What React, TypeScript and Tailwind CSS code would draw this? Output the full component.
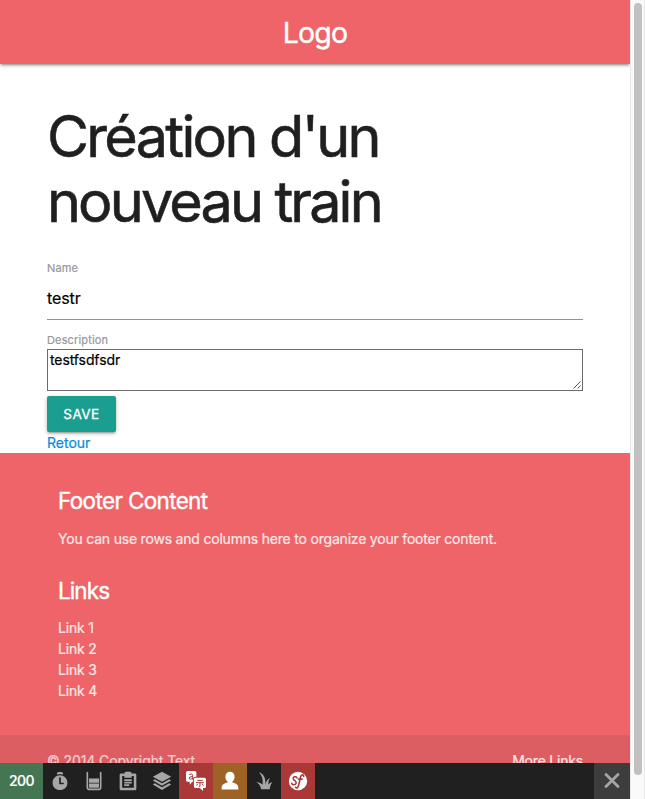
import React from "react";

const GREY = "#a6a6a6";

function ToolbarIcon({ className, children }: { className?: string; children: React.ReactNode }) {
  return (
    <div className={"flex h-9 w-[34px] shrink-0 items-center justify-center " + (className ?? "")}>
      <svg width="20" height="20" viewBox="0 0 24 24" fill={GREY}>
        {children}
      </svg>
    </div>
  );
}

function Toolbar() {
  return (
    <div className="absolute bottom-0 left-0 flex h-9 w-[630px] bg-[#202020]">
      <div className="flex h-9 w-[43px] items-center justify-center bg-[#457653] text-sm font-medium tracking-[-0.600px] text-white">200</div>
      <ToolbarIcon>
        <path d="M15.1,4.3c-2.1-0.5-4.2-0.5-6.2,0C8.6,4.3,8.2,4.1,8.2,3.8V3.4c0-1.2,1-2.3,2.3-2.3h3c1.2,0,2.3,1,2.3,2.3v0.3C15.8,4.1,15.4,4.3,15.1,4.3z M20.9,14c0,4.9-4,8.9-8.9,8.9s-8.9-4-8.9-8.9s4-8.9,8.9-8.9S20.9,9.1,20.9,14z M16.7,15c0-0.6-0.4-1-1-1H13V8.4c0-0.6-0.4-1-1-1s-1,0.4-1,1v6.2c0,0.6,0.4,1.3,1,1.3h3.7C16.2,16,16.7,15.6,16.7,15z" />
      </ToolbarIcon>
      <ToolbarIcon>
        <path d="M6,18.9V15h12v3.9c0,0.7-0.2,1.1-1,1.1H7C6.2,20,6,19.6,6,18.9z M20,1c-0.6,0-1,0.5-1,1.1l0,18c0,0.5-0.4,0.9-0.9,0.9H5.9C5.4,21,5,20.6,5,20.1l0-18C5,1.5,4.6,1,4,1C3.5,1,3,1.5,3,2.1l0,18C3,21.7,4.3,23,5.9,23h12.2c1.6,0,2.9-1.3,2.9-2.9l0-18C21,1.5,20.6,1,20,1z M18,9H6v5h12V9z" />
      </ToolbarIcon>
      <ToolbarIcon>
        <path
          fillRule="evenodd"
          d="M3.5 3H8V2.2Q8 1 9.2 1h5.6Q16 1 16 2.2V3h4.5Q22 3 22 4.5v17q0 1.500-1.500 1.500h-17Q2 23 2 21.500v-17Q2 3 3.500 3zM5 6v14h14V6h-2.500v1.300Q16.500 8 15.800 8H8.200Q7.500 8 7.500 7.300V6zM7.500 10h9v2h-9zM7.500 13h9v2h-9zM7.500 16h6v2h-6z"
        />
      </ToolbarIcon>
      <ToolbarIcon>
        <path d="M12 1L23 7 12 13 1 7zM3.300 10L12 14.700 20.700 10 23 11.500 12 17.800 1 11.500zM3.300 14.700L12 19.400 20.700 14.700 23 16.200 12 22.800 1 16.200z" />
      </ToolbarIcon>
      <ToolbarIcon className="bg-[#aa3836]">
        <path fill="#fff" d="M2 0h8.500q2 0 2 2v5H11.500Q8.500 7 8.500 10v3H7.500l-3 3.500V13H2q-2 0-2-2V2Q0 0 2 0z" />
        <path fill="#fff" d="M11.500 8H22q2 0 2 2v8.500q0 2-2 2h-1.500V24L16.500 20.500h-5q-2 0-2-2V10q0-2 2-2z" />
        <path fill="none" stroke="#aa3836" strokeWidth="1.200" d="M3.800 4.300Q8 2.500 8 5v5.500M8 6.700Q3.500 6.700 3.700 8.700 4.500 11 8 9M13.500 11.300h6.500M12 14h9.500M16.800 14v4.500h-1.300M14 15.500l-1.300 2M19.500 15.500l1.300 2" />
      </ToolbarIcon>
      <ToolbarIcon className="bg-[#9d6224]">
        <path fill="#fff" d="M12 1c3.500 0 5.500 2.500 5.500 5.800 0 2.400-1 4.800-2.700 6.100v.8c4.500 1 7.200 2.600 7.200 6.300v2.200H2V20c0-3.700 2.700-5.300 7.200-6.300v-.8C7.500 11.600 6.500 9.200 6.500 6.800 6.500 3.500 8.500 1 12 1z" />
      </ToolbarIcon>
      <ToolbarIcon>
        <path d="M6 1.500C12 3.500 14.200 9 13.800 16.500c.8-4 2.300-7 5.300-8-1.500 2.200-2 5-1.800 8 1-1.800 2.500-2.800 4.800-3-2.200 2.200-2.800 5-3.200 8.500H8.500C8 17.800 6 15 3 13.500c3-.2 5.500.8 7.300 3C11 10.500 9.800 5.500 6 1.500z" />
      </ToolbarIcon>
      <ToolbarIcon className="bg-[#aa3836]">
        <circle cx="12" cy="12" r="11" fill="#fff" />
        <path fill="none" stroke="#aa3836" strokeWidth="1.900" strokeLinecap="round" d="M10.800 8.200C10.300 6 5.500 6.700 6.300 9.500c.6 1.800 4 2.500 3.500 5-.5 2.700-5.300 2.500-5.300.3M18.800 6.500c.3-2.500-2.800-2.600-3.800.8L12.800 17c-.8 3.300-2.500 4-3.800 2.500M12.500 9.700h4.500" />
      </ToolbarIcon>
      <div className="ml-auto flex h-9 w-9 items-center justify-center bg-[#3d3d3d]">
        <svg width="16" height="16" viewBox="0 0 16 16" fill="none" stroke={GREY} strokeWidth="2.800" strokeLinecap="round">
          <path d="M2 1.500l12 12M14 1.500L2 13.500" />
        </svg>
      </div>
    </div>
  );
}

export default function App() {
  return (
    <div className="relative flex h-[799px] w-[645px] overflow-hidden bg-white font-['Inter',sans-serif] text-sm leading-[21px] [-webkit-text-stroke:0.200px]">
      <div className="flex h-full w-[630px] shrink-0 flex-col overflow-hidden">
        <header className="z-10 flex h-16 shrink-0 items-center justify-center bg-[#ee6468] text-[28.500px] tracking-[-0.800px] text-white shadow-[0_2px_2px_0_rgba(0,0,0,0.14),0_3px_1px_-2px_rgba(0,0,0,0.12),0_1px_5px_0_rgba(0,0,0,0.2)] [-webkit-text-stroke:0.400px]">
          Logo
        </header>
        <main className="flex h-[389px] shrink-0 flex-col px-[47px] pt-[40px]">
          <h1 className="h-[152px] shrink-0 text-[57.500px] leading-[65px] tracking-[-2.850px] text-[#1f1f1f] [-webkit-text-stroke:0.600px]">
            <span className="tracking-[-2.700px]">Création d'un</span>
            <br />
            nouveau train
          </h1>
          <label className="h-[21px] shrink-0 pt-[2px] text-[11px] leading-[21px] tracking-[0.150px] text-[#989898]">Name</label>
          <div className="flex h-[43px] w-[536px] shrink-0 items-center border-b border-[#919191] text-base tracking-[-0.100px] text-black">testr</div>
          <label className="mt-[10px] h-[19px] shrink-0 text-[11px] leading-[21px] tracking-[0.150px] text-[#989898]">Description</label>
          <div className="flex h-[42px] w-[536px] shrink-0 border border-[#6b6b6b] pl-[2px] text-sm leading-[20px] tracking-[-0.100px] text-black">
            <span>testfsdfsdr</span>
            <svg className="mt-auto ml-auto" width="9" height="9" viewBox="0 0 9 9" stroke="#555" strokeWidth="1">
              <path d="M0.500 7.500l7-7M4.500 7.500l3-3" />
            </svg>
          </div>
          <button className="mt-[5px] h-9 w-[69px] shrink-0 rounded-[2px] bg-[#1a9e8f] text-[13.500px] tracking-[0.500px] text-white shadow-[0_2px_2px_0_rgba(0,0,0,0.14),0_3px_1px_-2px_rgba(0,0,0,0.12),0_1px_5px_0_rgba(0,0,0,0.2)] [-webkit-text-stroke:0.300px]">
            SAVE
          </button>
          <a className="text-[#058dd9]">Retour</a>
        </main>
        <footer className="flex grow flex-col bg-[#ee6468] tracking-[-0.200px] text-[#fbe9e9]">
          <section className="flex h-[282px] shrink-0 flex-col px-[58px] pt-[35px]">
            <h5 className="text-[22.500px] leading-[26px] tracking-[-0.650px] text-white [-webkit-text-stroke:0.400px]">Footer Content</h5>
            <p className="mt-[14px]">You can use rows and columns here to organize your footer content.</p>
            <h5 className="mt-[29px] text-[22.500px] leading-[26px] tracking-[-0.900px] text-white [-webkit-text-stroke:0.400px]">Links</h5>
            <ul className="mt-[13px]">
              <li>Link 1</li>
              <li>Link 2</li>
              <li>Link 3</li>
              <li>Link 4</li>
            </ul>
          </section>
          <div className="flex grow justify-between bg-[#dc5e62] px-[47px] pt-[15px]">
            <span className="tracking-[-0.100px] text-[#f4d0d1]">© 2014 Copyright Text</span>
            <a>More Links</a>
          </div>
        </footer>
      </div>
      <div className="flex w-[15px] shrink-0 justify-center border-x border-[#e8e8e8] bg-[#fafafa] pt-[3px]">
        <div className="h-[772px] w-2 rounded-full bg-[#c1c1c1]" />
      </div>
      <Toolbar />
    </div>
  );
}
